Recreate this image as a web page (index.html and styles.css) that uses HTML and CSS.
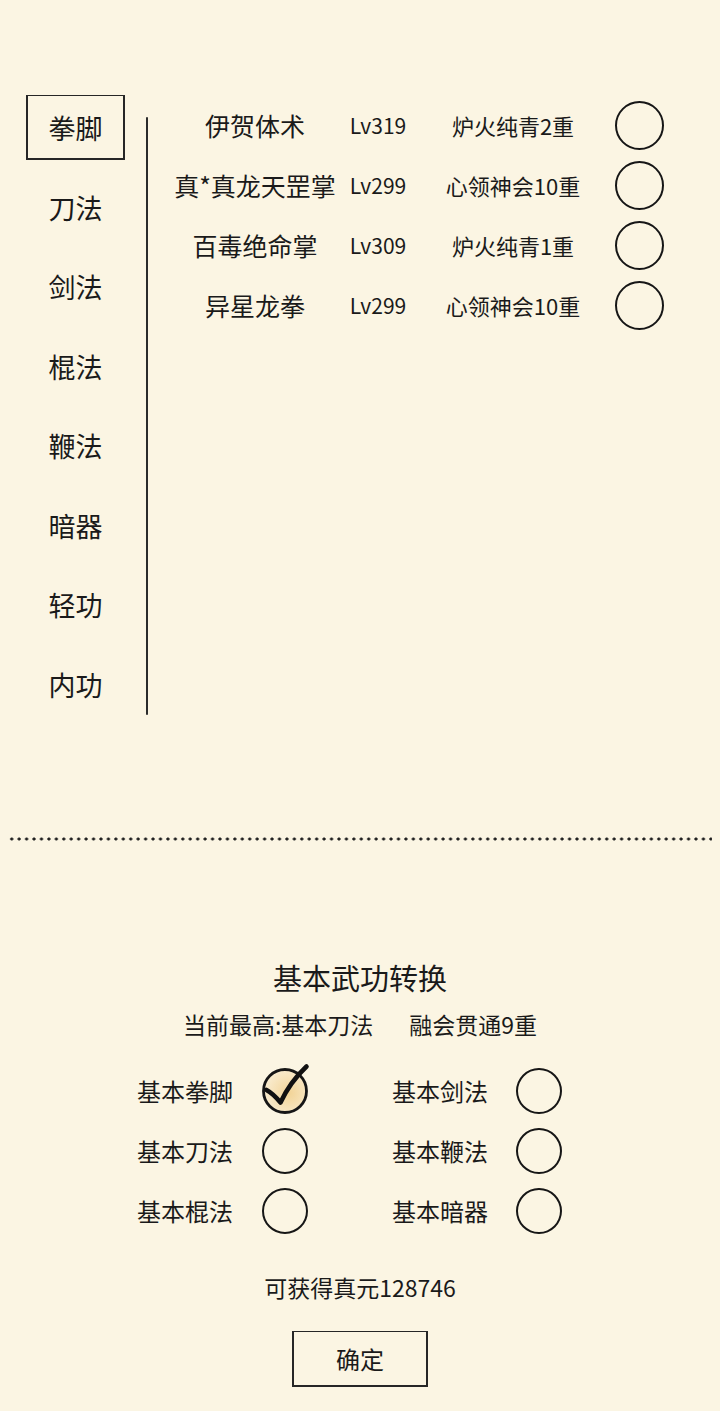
FILE: index.html
```html
<!DOCTYPE html>
<html lang="zh-CN">
<head>
  <meta charset="UTF-8" />
  <title>武功转换</title>
  <link rel="stylesheet" href="styles.css">
</head>
<body>
  <div class="page">
    <!-- 武功列表 -->
    <div class="skills">
      <ul class="tabs">
        <li class="tab active">拳脚</li>
        <li class="tab">刀法</li>
        <li class="tab">剑法</li>
        <li class="tab">棍法</li>
        <li class="tab">鞭法</li>
        <li class="tab">暗器</li>
        <li class="tab">轻功</li>
        <li class="tab">内功</li>
      </ul>

      <div class="divider"></div>

      <div class="skill-list">
        <div class="skill-row">
          <span class="skill-name">伊贺体术</span>
          <span class="skill-lv">Lv319</span>
          <span class="skill-stage">炉火纯青2重</span>
          <span class="ring big"></span>
        </div>
        <div class="skill-row">
          <span class="skill-name">真*真龙天罡掌</span>
          <span class="skill-lv">Lv299</span>
          <span class="skill-stage">心领神会10重</span>
          <span class="ring big"></span>
        </div>
        <div class="skill-row">
          <span class="skill-name">百毒绝命掌</span>
          <span class="skill-lv">Lv309</span>
          <span class="skill-stage">炉火纯青1重</span>
          <span class="ring big"></span>
        </div>
        <div class="skill-row">
          <span class="skill-name">异星龙拳</span>
          <span class="skill-lv">Lv299</span>
          <span class="skill-stage">心领神会10重</span>
          <span class="ring big"></span>
        </div>
      </div>
    </div>

    <div class="dots"></div>

    <!-- 基本武功转换 -->
    <section class="convert">
      <h2 class="convert-title">基本武功转换</h2>
      <p class="convert-info">
        <span>当前最高:基本刀法</span>
        <span>融会贯通9重</span>
      </p>

      <div class="options">
        <div class="option">
          <span class="option-label">基本拳脚</span>
          <svg class="check" width="50" height="50" viewBox="0 0 50 50">
            <defs>
              <radialGradient id="gold" cx="60%" cy="55%" r="60%">
                <stop offset="0" stop-color="#f2d497" />
                <stop offset="1" stop-color="#f9ecd0" />
              </radialGradient>
            </defs>
            <circle cx="25" cy="25" r="21.5" fill="url(#gold)" stroke="#161616" stroke-width="2.8" />
            <path d="M6.5 24 Q13 27.5 20.5 36.5 Q30 16 46.5 0.5" fill="none" stroke="#111" stroke-width="4.6" stroke-linecap="round" stroke-linejoin="round" />
          </svg>
        </div>
        <div class="option">
          <span class="option-label">基本剑法</span>
          <span class="ring"></span>
        </div>
        <div class="option">
          <span class="option-label">基本刀法</span>
          <span class="ring"></span>
        </div>
        <div class="option">
          <span class="option-label">基本鞭法</span>
          <span class="ring"></span>
        </div>
        <div class="option">
          <span class="option-label">基本棍法</span>
          <span class="ring"></span>
        </div>
        <div class="option">
          <span class="option-label">基本暗器</span>
          <span class="ring"></span>
        </div>
      </div>

      <p class="reward">可获得真元128746</p>

      <button class="confirm">确定</button>
    </section>
  </div>
</body>
</html>
```

FILE: styles.css
```css
html,
body {
  margin: 0;
  background-color: #fbf5e3;
}

body {
  font-family: "Noto Sans CJK SC", "Noto Sans", sans-serif;
  color: #1a1a1a;
}

.page {
  min-height: 1411px;
}

/* top part: tabs + list */
.skills {
  display: flex;
  padding: 95px 0 0 26px;
}

.tabs {
  list-style: none;
  margin: 0;
  padding: 0;
  display: flex;
  flex-direction: column;
  gap: 14.57px;
}

.tab {
  width: 99px;
  height: 65px;
  box-sizing: border-box;
  border: 2px solid transparent;
  display: flex;
  align-items: center;
  justify-content: center;
  font-size: 27px;
}

.tab.active {
  border-color: #262626;
  border-top-width: 1.5px;
}

.divider {
  width: 2px;
  height: 598px;
  margin: 22px 0 0 21px;
  background-color: #2b2b2b;
  border-radius: 1px;
}

.skill-list {
  margin-left: 22px;
}

.skill-row {
  display: grid;
  grid-template-columns: 170px 76px 194px 58px;
  align-items: center;
  height: 60px;
}

.skill-name {
  font-size: 25px;
  text-align: center;
  white-space: nowrap;
}

.skill-lv {
  font-size: 21px;
  text-align: center;
}

.skill-stage {
  font-size: 22px;
  text-align: center;
  white-space: nowrap;
}

.ring {
  display: block;
  width: 46px;
  height: 46px;
  box-sizing: border-box;
  border: 2.8px solid #161616;
  border-radius: 50%;
  justify-self: center;
}

.ring.big {
  width: 49px;
  height: 49px;
}

/* dotted separator */
.dots {
  height: 4px;
  margin: 120px 8px 0;
  background-image: radial-gradient(circle, #1f1f1f 1.3px, transparent 1.8px);
  background-size: 7.45px 4px;
}

/* bottom part */
.convert {
  text-align: center;
}

.convert-title {
  margin: 116px 0 0;
  font-size: 29px;
  font-weight: normal;
  line-height: 40px;
}

.convert-info {
  display: flex;
  justify-content: center;
  gap: 36px;
  margin: 12px 0 0;
  font-size: 23px;
  line-height: 30px;
}

.options {
  display: grid;
  grid-template-columns: 255px 170px;
  margin: 22px 0 0 137px;
}

.option {
  display: flex;
  align-items: center;
  height: 60px;
}

.option-label {
  width: 125px;
  text-align: left;
  font-size: 24px;
}

.check {
  overflow: visible;
  margin-left: -2px;
}

.reward {
  margin: 31px 0 0;
  font-size: 23px;
  line-height: 30px;
}

.confirm {
  margin-top: 29px;
  width: 136px;
  height: 56px;
  background: transparent;
  border: 2px solid #262626;
  border-top-width: 1.5px;
  font-family: inherit;
  font-size: 24px;
  color: #1a1a1a;
  cursor: pointer;
}
```
